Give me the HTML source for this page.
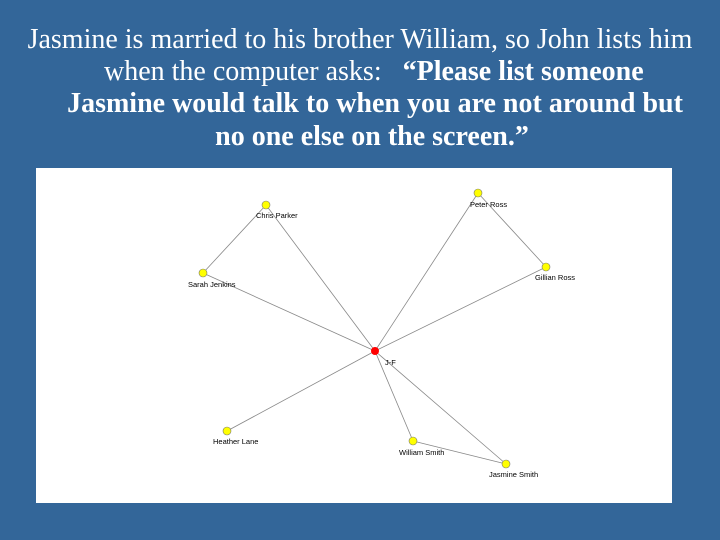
<!DOCTYPE html>
<html><head><style>
body{margin:0;width:720px;height:540px;background:#336699;overflow:hidden;position:relative;font-family:"Liberation Serif",serif;color:#fff}
.l{position:absolute;left:0;width:720px;text-align:center;font-size:28px;line-height:30px;white-space:nowrap}
b{font-weight:bold}
svg{position:absolute;left:36px;top:168px}
</style></head><body>
<div class="l" style="top:25px;left:0;width:720px">Jasmine is married to his brother William, so John lists him</div>
<div class="l" style="top:57px;left:104px;width:auto;text-align:left">when the computer asks:&nbsp;&nbsp; <b>“Please list someone</b></div>
<div class="l" style="top:89px;left:15px"><b>Jasmine would talk to when you are not around but</b></div>
<div class="l" style="top:122px;left:12px"><b>no one else on the screen.”</b></div>
<svg width="636" height="335" viewBox="36 168 636 335" font-family="Liberation Sans,sans-serif" font-size="7.5">
<rect x="36" y="168" width="636" height="335" fill="#fff"/>
<g stroke="#888" stroke-width="0.8">
<line x1="375" y1="351" x2="266" y2="205"/><line x1="375" y1="351" x2="203" y2="273"/>
<line x1="375" y1="351" x2="478" y2="193"/><line x1="375" y1="351" x2="546" y2="267"/>
<line x1="375" y1="351" x2="227" y2="431"/><line x1="375" y1="351" x2="413" y2="441"/>
<line x1="375" y1="351" x2="506" y2="464"/><line x1="266" y1="205" x2="203" y2="273"/>
<line x1="478" y1="193" x2="546" y2="267"/><line x1="413" y1="441" x2="506" y2="464"/>
</g>
<g fill="#ff0" stroke="#777" stroke-width="0.6">
<circle cx="266" cy="205" r="4"/><circle cx="203" cy="273" r="4"/><circle cx="478" cy="193" r="4"/>
<circle cx="546" cy="267" r="4"/><circle cx="227" cy="431" r="4"/><circle cx="413" cy="441" r="4"/><circle cx="506" cy="464" r="4"/>
</g>
<circle cx="375" cy="351" r="4" fill="#f00"/>
<g fill="#000">
<text x="256" y="218">Chris Parker</text><text x="188" y="287">Sarah Jenkins</text>
<text x="470" y="207">Peter Ross</text><text x="535" y="280">Gillian Ross</text>
<text x="213" y="444">Heather Lane</text><text x="399" y="455">William Smith</text>
<text x="489" y="477">Jasmine Smith</text><text x="385" y="365">J-F</text>
</g>
</svg>
</body></html>
